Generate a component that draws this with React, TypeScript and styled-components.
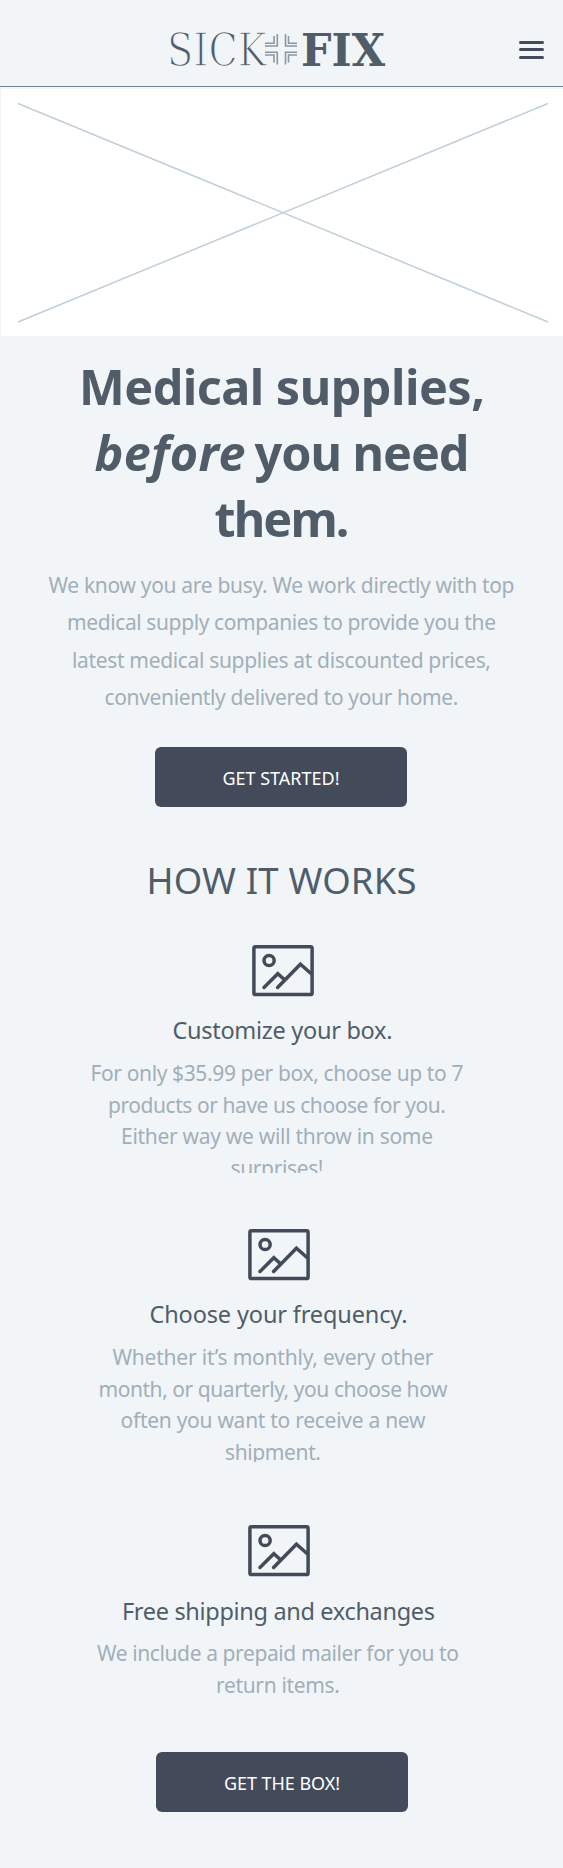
import React, { useLayoutEffect, useRef, useState } from 'react';
import styled, { createGlobalStyle } from 'styled-components';

const ink = '#505d69';
const navy = '#434b5a';
const muted = '#a1afb9';
const page = '#f1f5f8';

const GlobalStyle = createGlobalStyle`
  * { box-sizing: border-box; }
  body { margin: 0; background: ${page}; }
  h1, h2, h3, p { margin: 0; font-weight: 400; }
`;

const Page = styled.div`
  display: flex;
  flex-direction: column;
  align-items: center;
  width: 563px;
  height: 1868px;
  overflow: hidden;
  background: ${page};
  color: ${ink};
  font-family: 'Noto Sans', 'Open Sans', sans-serif;
`;

const Header = styled.header`
  display: grid;
  grid-template-columns: 168px 1fr 44.5px;
  align-items: center;
  width: 100%;
  height: 87px;
  flex: none;
  border-bottom: 1px solid #74828c;
`;

const Logo = styled.svg`
  grid-column: 2;
  display: block;
  width: 220px;
  height: 86px;
`;

const MenuButton = styled.button`
  grid-column: 3;
  display: flex;
  flex-direction: column;
  gap: 4.5px;
  width: 25px;
  margin-top: 13px;
  padding: 0;
  border: 0;
  background: none;
`;

const Bar = styled.span`
  height: 3px;
  border-radius: 2px;
  background: ${navy};
`;

const HeroImage = styled.svg`
  display: block;
  flex: none;
  width: 562px;
  height: 247px;
  margin: 2px 0 0 1px;
  background: #fff;
`;

const HeroTitle = styled.h1`
  margin: 17px 0 0 1px;
  font-size: 48.5px;
  font-weight: 700;
  line-height: 66px;
`;

const Lead = styled.p`
  margin-top: 15.5px;
  font-size: 21px;
  line-height: 37.5px;
  color: ${muted};
`;

const Button = styled.button<{ $top: number; $shift?: number }>`
  display: flex;
  justify-content: center;
  flex: none;
  width: 252px;
  height: 60px;
  margin: ${(p) => p.$top}px 0 0 ${(p) => p.$shift ?? 0}px;
  padding: 1px 0 0;
  border: 0;
  border-radius: 6px;
  background: ${navy};
  color: #fff;
  font: 400 18px/60px 'Noto Sans', sans-serif;
`;

const SectionTitle = styled.h2`
  margin-top: 48px;
  font-size: 36.5px;
  line-height: 50px;
`;

const Feature = styled.section<{ $top: number; $center: number }>`
  display: flex;
  flex-direction: column;
  align-items: center;
  flex: none;
  width: ${(p) => p.$center * 2}px;
  margin-top: ${(p) => p.$top}px;
  align-self: flex-start;
`;

const Picture = styled.svg`
  display: block;
  width: 62px;
  height: 52px;
`;

const FeatureTitle = styled.h3<{ $gap: number }>`
  margin-top: ${(p) => p.$gap}px;
  font-size: 23.5px;
  line-height: 34px;
`;

const FeatureText = styled.p<{ $height: number; $nudge: number; $gap: number }>`
  height: ${(p) => p.$height}px;
  margin: ${(p) => p.$gap}px ${(p) => p.$nudge}px 0 0;
  overflow: hidden;
  font-size: 21px;
  line-height: 31.5px;
  color: ${muted};
`;

const Row = styled.span`
  display: flex;
  justify-content: center;
  gap: 9px;
  white-space: nowrap;
`;

const Tracked = styled.span`
  display: block;
  white-space: pre;
`;

/* Tracks a run of text so that it sets to the given measure. */
function Fit({ width, children, as }: { width: number; children: string; as?: 'em' }) {
  const ref = useRef<HTMLSpanElement>(null);
  const [spacing, setSpacing] = useState(0);
  useLayoutEffect(() => {
    if (ref.current) {
      const natural = ref.current.getBoundingClientRect().width;
      setSpacing((width - natural) / (children.length - 1));
    }
  }, []);
  return (
    <Tracked ref={ref} as={as} style={{ letterSpacing: spacing, marginRight: -spacing }}>
      {children}
    </Tracked>
  );
}

type LineSpec = [text: string, width: number];

function Lines({ items }: { items: LineSpec[] }) {
  return (
    <>
      {items.map(([text, width]) => (
        <Row key={text}>
          <Fit width={width}>{text}</Fit>
        </Row>
      ))}
    </>
  );
}

function PictureIcon() {
  return (
    <Picture viewBox="0 0 62 52" fill="none" stroke={navy} strokeWidth="3.5" strokeLinecap="round">
      <rect x="1.9" y="1.8" width="58.2" height="47.8" rx="1.6" />
      <circle cx="17.1" cy="15.5" r="5.1" />
      <path d="M12 42.5 25.8 28.7 32 34.3" />
      <path d="M25.6 42.5 48.4 19.2 59 28.5" />
    </Picture>
  );
}

const features = [
  {
    top: 40, center: 282.5, nudge: 11, titleGap: 16, gap: 11, height: 115,
    title: ['Customize your box.', 220] as LineSpec,
    text: [
      ['For only $35.99 per box, choose up to 7', 373],
      ['products or have us choose for you.', 338],
      ['Either way we will throw in some', 312],
      ['surprises!', 93],
    ] as LineSpec[],
  },
  {
    top: 55.5, center: 278.5, nudge: 11, titleGap: 16.5, gap: 11, height: 119.5,
    title: ['Choose your frequency.', 258] as LineSpec,
    text: [
      ['Whether it’s monthly, every other', 321],
      ['month, or quarterly, you choose how', 349],
      ['often you want to receive a new', 305],
      ['shipment.', 96],
    ] as LineSpec[],
  },
  {
    top: 63.5, center: 278.5, nudge: 1, titleGap: 17, gap: 10, height: 63,
    title: ['Free shipping and exchanges', 313] as LineSpec,
    text: [
      ['We include a prepaid mailer for you to', 362],
      ['return items.', 124],
    ] as LineSpec[],
  },
];

export default function App() {
  return (
    <Page>
      <GlobalStyle />
      <Header>
        <Logo viewBox="168 0 220 86">
          <text x="167" y="66.2" fontFamily="DejaVu Serif" fontSize="46" fill={ink} stroke={page} strokeWidth="1.5" textLength="99.5" lengthAdjust="spacingAndGlyphs">SICK</text>
          <g fill="none" stroke="#8b97a1" strokeWidth="1.6">
            <path d="M265 46h12.3V34M265 43.2h9V36M297 46H285.5V34M297 43.2H288.5V36" />
            <path d="M265 52.3h12.3V64.5M265 55h9V62.5M297 52.3H285.5V64.5M297 55H288.5V62.5" />
          </g>
          <text x="301" y="65.5" fontFamily="DejaVu Serif" fontWeight="700" fontSize="44.5" fill={ink} textLength="84" lengthAdjust="spacingAndGlyphs">FIX</text>
        </Logo>
        <MenuButton aria-label="Menu">
          <Bar /><Bar /><Bar />
        </MenuButton>
      </Header>
      <HeroImage viewBox="1 89 562 247">
        <path d="M18 103.5 548 322M548 103.5 18 322" stroke="#c1cfd9" strokeWidth="1.5" fill="none" />
      </HeroImage>
      <HeroTitle>
        <Row><Fit width={406}>Medical supplies,</Fit></Row>
        <Row><Fit as="em" width={151}>before</Fit><Fit width={215}>you need</Fit></Row>
        <Row><Fit width={135}>them.</Fit></Row>
      </HeroTitle>
      <Lead>
        <Lines items={[
          ['We know you are busy. We work directly with top', 466],
          ['medical supply companies to provide you the', 429],
          ['latest medical supplies at discounted prices,', 419],
          ['conveniently delivered to your home.', 354],
        ]} />
      </Lead>
      <Button $top={30.5} $shift={-1}><Fit width={117}>GET STARTED!</Fit></Button>
      <SectionTitle><Fit width={270}>HOW IT WORKS</Fit></SectionTitle>
      {features.map((f) => (
        <Feature key={f.title[0]} $top={f.top} $center={f.center}>
          <PictureIcon />
          <FeatureTitle $gap={f.titleGap}><Fit width={f.title[1]}>{f.title[0]}</Fit></FeatureTitle>
          <FeatureText $height={f.height} $nudge={f.nudge} $gap={f.gap}>
            <Lines items={f.text} />
          </FeatureText>
        </Feature>
      ))}
      <Button $top={51} $shift={1}><Fit width={116}>GET THE BOX!</Fit></Button>
    </Page>
  );
}
